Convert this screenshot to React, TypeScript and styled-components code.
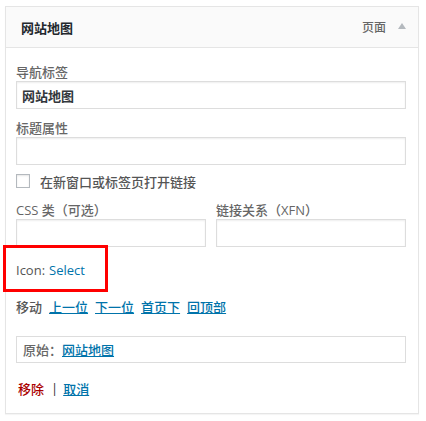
import styled, { createGlobalStyle } from "styled-components";

const GlobalStyle = createGlobalStyle`
  html, body {
    margin: 0;
    padding: 0;
    background: #fff;
  }
  body {
    font-family: "Open Sans", "Noto Sans CJK SC", sans-serif;
    font-size: 13px;
    font-weight: 500;
    color: #444;
  }
`;

const Page = styled.div`
  position: relative;
  width: 426px;
  height: 421px;
  padding: 6px 0 0 5px;
  box-sizing: border-box;
`;

const MenuItem = styled.div`
  width: 414px;
  border: 1px solid #e5e5e5;
  box-shadow: 0 1px 1px rgba(0, 0, 0, 0.04);
  box-sizing: border-box;
  background: #fff;
`;

const Handle = styled.div`
  display: flex;
  align-items: center;
  height: 40px;
  padding: 0 10px 0 15px;
  background: #fafafa;
  border-bottom: 1px solid #e5e5e5;
`;

const HandleTitle = styled.span`
  flex: 1;
  font-weight: 700;
  color: #23282d;
  font-size: 13px;
`;

const HandleType = styled.span`
  color: #666;
  font-size: 12px;
  margin-right: 12px;
`;

const Arrow = styled.span`
  width: 0;
  height: 0;
  border-left: 4px solid transparent;
  border-right: 4px solid transparent;
  border-bottom: 6px solid #b4b9be;
  margin-right: 2px;
  margin-top: -3px;
`;

const Settings = styled.div`
  padding: 15px 10px 16px 10px;
  position: relative;
`;

const Field = styled.div<{ $gap?: number }>`
  display: flex;
  flex-direction: column;
  margin-top: ${(p) => p.$gap ?? 0}px;
`;

const Label = styled.span`
  line-height: 18px;
  height: 18px;
  color: #666;
  font-size: 13px;
`;

const Input = styled.div`
  width: 100%;
  height: 28px;
  box-sizing: border-box;
  border: 1px solid #ddd;
  box-shadow: inset 0 1px 2px rgba(0, 0, 0, 0.07);
  padding: 0 5px;
  display: flex;
  align-items: center;
  font-weight: 700;
  color: #32373c;
  background: #fff;
`;

const Row = styled.div<{ $gap: number; $indent?: number }>`
  display: flex;
  align-items: center;
  height: 18px;
  margin-top: ${(p) => p.$gap}px;
  padding-left: ${(p) => p.$indent ?? 0}px;
  color: #555;
`;

const Pair = styled.div`
  display: grid;
  grid-template-columns: 190px 190px;
  column-gap: 10px;
  margin-top: 11px;
  width: 390px;
`;

const Wide = styled.div`
  width: 390px;
`;

const CheckBox = styled.span`
  width: 14px;
  height: 14px;
  box-sizing: border-box;
  border: 1px solid #b4b9be;
  box-shadow: inset 0 1px 2px rgba(0, 0, 0, 0.1);
  background: #fff;
  margin-right: 10px;
`;

const MoveLabel = styled.span`
  margin-right: 7px;
`;

const Link = styled.a`
  color: #0073aa;
  text-decoration: underline;
  margin-right: 7px;
  cursor: pointer;
`;

const PlainLink = styled.a`
  color: #0073aa;
  text-decoration: none;
  font-weight: 400;
  margin-left: 4px;
`;

const IconLabel = styled.span`
  font-weight: 400;
`;

const Original = styled.div`
  width: 390px;
  height: 27px;
  box-sizing: border-box;
  border: 1px solid #ddd;
  margin-top: 21px;
  padding: 0 6px;
  display: flex;
  align-items: center;
  color: #666;
`;

const Delete = styled.a`
  color: #a00;
  text-decoration: none;
`;

const Sep = styled.span`
  color: #333;
  margin: 0 5px 0 7px;
`;

const Highlight = styled.div`
  position: absolute;
  left: 3px;
  top: 245px;
  width: 105px;
  height: 47px;
  box-sizing: border-box;
  border: 3px solid #ff0000;
  pointer-events: none;
`;

export default function App() {
  return (
    <>
      <GlobalStyle />
      <Page>
        <MenuItem>
          <Handle>
            <HandleTitle>网站地图</HandleTitle>
            <HandleType>页面</HandleType>
            <Arrow />
          </Handle>
          <Settings>
            <Wide>
              <Field>
                <Label>导航标签</Label>
                <Input>网站地图</Input>
              </Field>
              <Field $gap={10}>
                <Label>标题属性</Label>
                <Input />
              </Field>
            </Wide>
            <Row $gap={7}>
              <CheckBox />
              在新窗口或标签页打开链接
            </Row>
            <Pair>
              <Field>
                <Label>CSS 类（可选）</Label>
                <Input />
              </Field>
              <Field>
                <Label>链接关系（XFN）</Label>
                <Input />
              </Field>
            </Pair>
            <Row $gap={14}>
              <IconLabel>Icon:</IconLabel>
              <PlainLink>Select</PlainLink>
            </Row>
            <Row $gap={18}>
              <MoveLabel>移动</MoveLabel>
              <Link>上一位</Link>
              <Link>下一位</Link>
              <Link>首页下</Link>
              <Link>回顶部</Link>
            </Row>
            <Original>
              原始：
              <Link>网站地图</Link>
            </Original>
            <Row $gap={16} $indent={2}>
              <Delete>移除</Delete>
              <Sep>|</Sep>
              <Link>取消</Link>
            </Row>
          </Settings>
        </MenuItem>
        <Highlight />
      </Page>
    </>
  );
}
